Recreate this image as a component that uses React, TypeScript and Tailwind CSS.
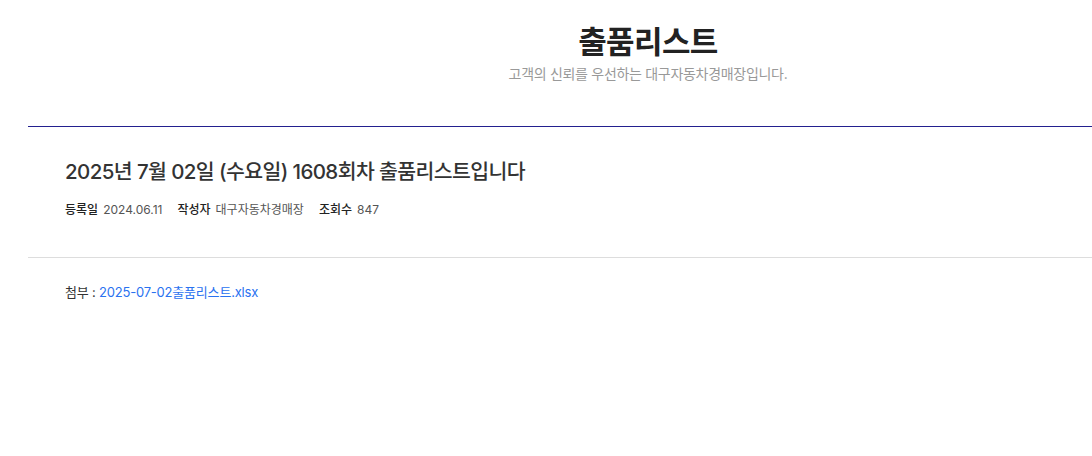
const font = { fontFamily: 'Inter, "Noto Sans CJK KR", sans-serif' }

const meta = [
  { label: '등록일', value: '2024.06.11' },
  { label: '작성자', value: '대구자동차경매장' },
  { label: '조회수', value: '847' },
]

export default function App() {
  return (
    <div className="w-[1092px] h-[456px] overflow-hidden bg-white" style={font}>
      <div className="ml-[28px] w-[1240px]">
        <header className="flex flex-col items-center pt-[22px] h-[127px] border-b border-[#23208f]">
          <h1 className="text-[31px] leading-[40px] font-bold text-[#222] tracking-[-0.6px]">출품리스트</h1>
          <p className="mt-[2px] text-[14px] leading-[20px] text-[#999] tracking-[-0.3px]">
            고객의 신뢰를 우선하는 대구자동차경매장입니다.
          </p>
        </header>

        <div className="px-[37px] pt-[30px] pb-[37px] border-b border-[#ddd]">
          <h2 className="text-[20.5px] leading-[30px] font-medium text-[#333] tracking-[-0.6px]">
            2025년 7월 02일 (수요일) 1608회차 출품리스트입니다
          </h2>
          <div className="mt-[13px] flex gap-[15px] text-[12px] leading-[20px]">
            {meta.map((m) => (
              <div key={m.label} className="flex gap-[5px]">
                <span className="font-medium text-[#222]">{m.label}</span>
                <span className="text-[#555]">{m.value}</span>
              </div>
            ))}
          </div>
        </div>

        <div className="px-[37px] pt-[24px] text-[13px] leading-[20px] text-[#333] tracking-[-0.2px]">
          첨부 : <a href="#" className="text-[#2a72f0]">2025-07-02출품리스트.xlsx</a>
        </div>
      </div>
    </div>
  )
}
